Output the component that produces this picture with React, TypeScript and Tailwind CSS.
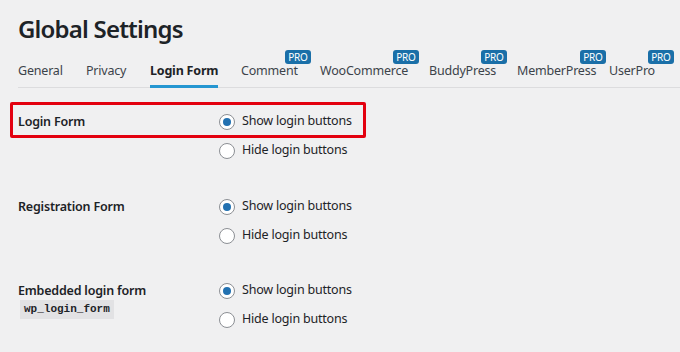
import React from "react";

const font = { fontFamily: '"Noto Sans", "Open Sans", sans-serif' };

function Radio({ checked, label }: { checked?: boolean; label: string }) {
  return (
    <div className="flex items-center h-[29px]">
      <span className="w-[16px] h-[16px] rounded-full border border-[#8c8f94] bg-white flex items-center justify-center">
        {checked && <span className="w-[8px] h-[8px] rounded-full bg-[#2271b1]" />}
      </span>
      <span className="ml-[7px] text-[12.5px] tracking-[-0.2px] text-[#1d2327]">{label}</span>
    </div>
  );
}

const tabs: { name: string; w: number; pro?: number; active?: boolean }[] = [
  { name: "General", w: 68 },
  { name: "Privacy", w: 64 },
  { name: "Login Form", w: 91, active: true },
  { name: "Comment", w: 79, pro: 44 },
  { name: "WooCommerce", w: 109, pro: 73 },
  { name: "BuddyPress", w: 88, pro: 52 },
  { name: "MemberPress", w: 92, pro: 63 },
  { name: "UserPro", w: 60, pro: 39 },
];

function Row({ label, code, boxed }: { label: string; code?: string; boxed?: boolean }) {
  return (
    <div className="relative flex">
      {boxed && (
        <div className="absolute left-[-8px] top-[-5px] w-[356px] h-[36px] border-[3px] border-[#e3000f] rounded-[2px]" />
      )}
      <div className="w-[201px] pt-[5px]">
        <div className="text-[12.5px] tracking-[-0.2px] font-semibold text-[#1d2327] leading-[19px]">{label}</div>
        {code && (
          <div className="ml-[2px] w-fit bg-[#e2e2e4] px-[4px] py-[2px] text-[11px] font-bold text-[#1d2327] leading-[15px]" style={{ fontFamily: '"Liberation Mono", monospace' }}>
            {code}
          </div>
        )}
      </div>
      <div className="flex flex-col">
        <Radio checked label="Show login buttons" />
        <Radio label="Hide login buttons" />
      </div>
    </div>
  );
}

export default function App() {
  return (
    <div className="w-[680px] h-[352px] bg-[#f0f0f1] overflow-hidden" style={font}>
      <div className="pl-[18px] pt-[14px]">
        <h1 className="text-[24px] font-semibold text-[#1d2327] leading-[30px] tracking-[-0.8px]">Global Settings</h1>
        <div className="flex border-b border-[#dcdcde] h-[44px]">
          {tabs.map((t) => (
            <div key={t.name} className="relative shrink-0 h-[43px]" style={{ width: t.w }}>
              <div className="inline-block relative h-[43px] pt-[13px]">
                <span className={"text-[12.5px] tracking-[-0.2px] leading-[18px] " + (t.active ? "font-bold text-[#1d2327]" : "text-[#3c434a]")}>
                  {t.name}
                </span>
                {t.active && <span className="absolute left-0 right-0 bottom-[-1px] h-[3px] bg-[#2596d1]" />}
              </div>
              {t.pro !== undefined && (
                <span
                  className="absolute top-[6px] w-[26px] h-[14px] rounded-[3px] bg-[#1a6fa8] text-white text-[10px] leading-[14px] text-center tracking-[-0.2px]"
                  style={{ left: t.pro }}
                >
                  PRO
                </span>
              )}
            </div>
          ))}
        </div>
        <div className="mt-[19px] flex flex-col">
          <Row label="Login Form" boxed />
          <div className="mt-[27px]">
            <Row label="Registration Form" />
          </div>
          <div className="mt-[26px]">
            <Row label="Embedded login form" code="wp_login_form" />
          </div>
        </div>
      </div>
    </div>
  );
}
